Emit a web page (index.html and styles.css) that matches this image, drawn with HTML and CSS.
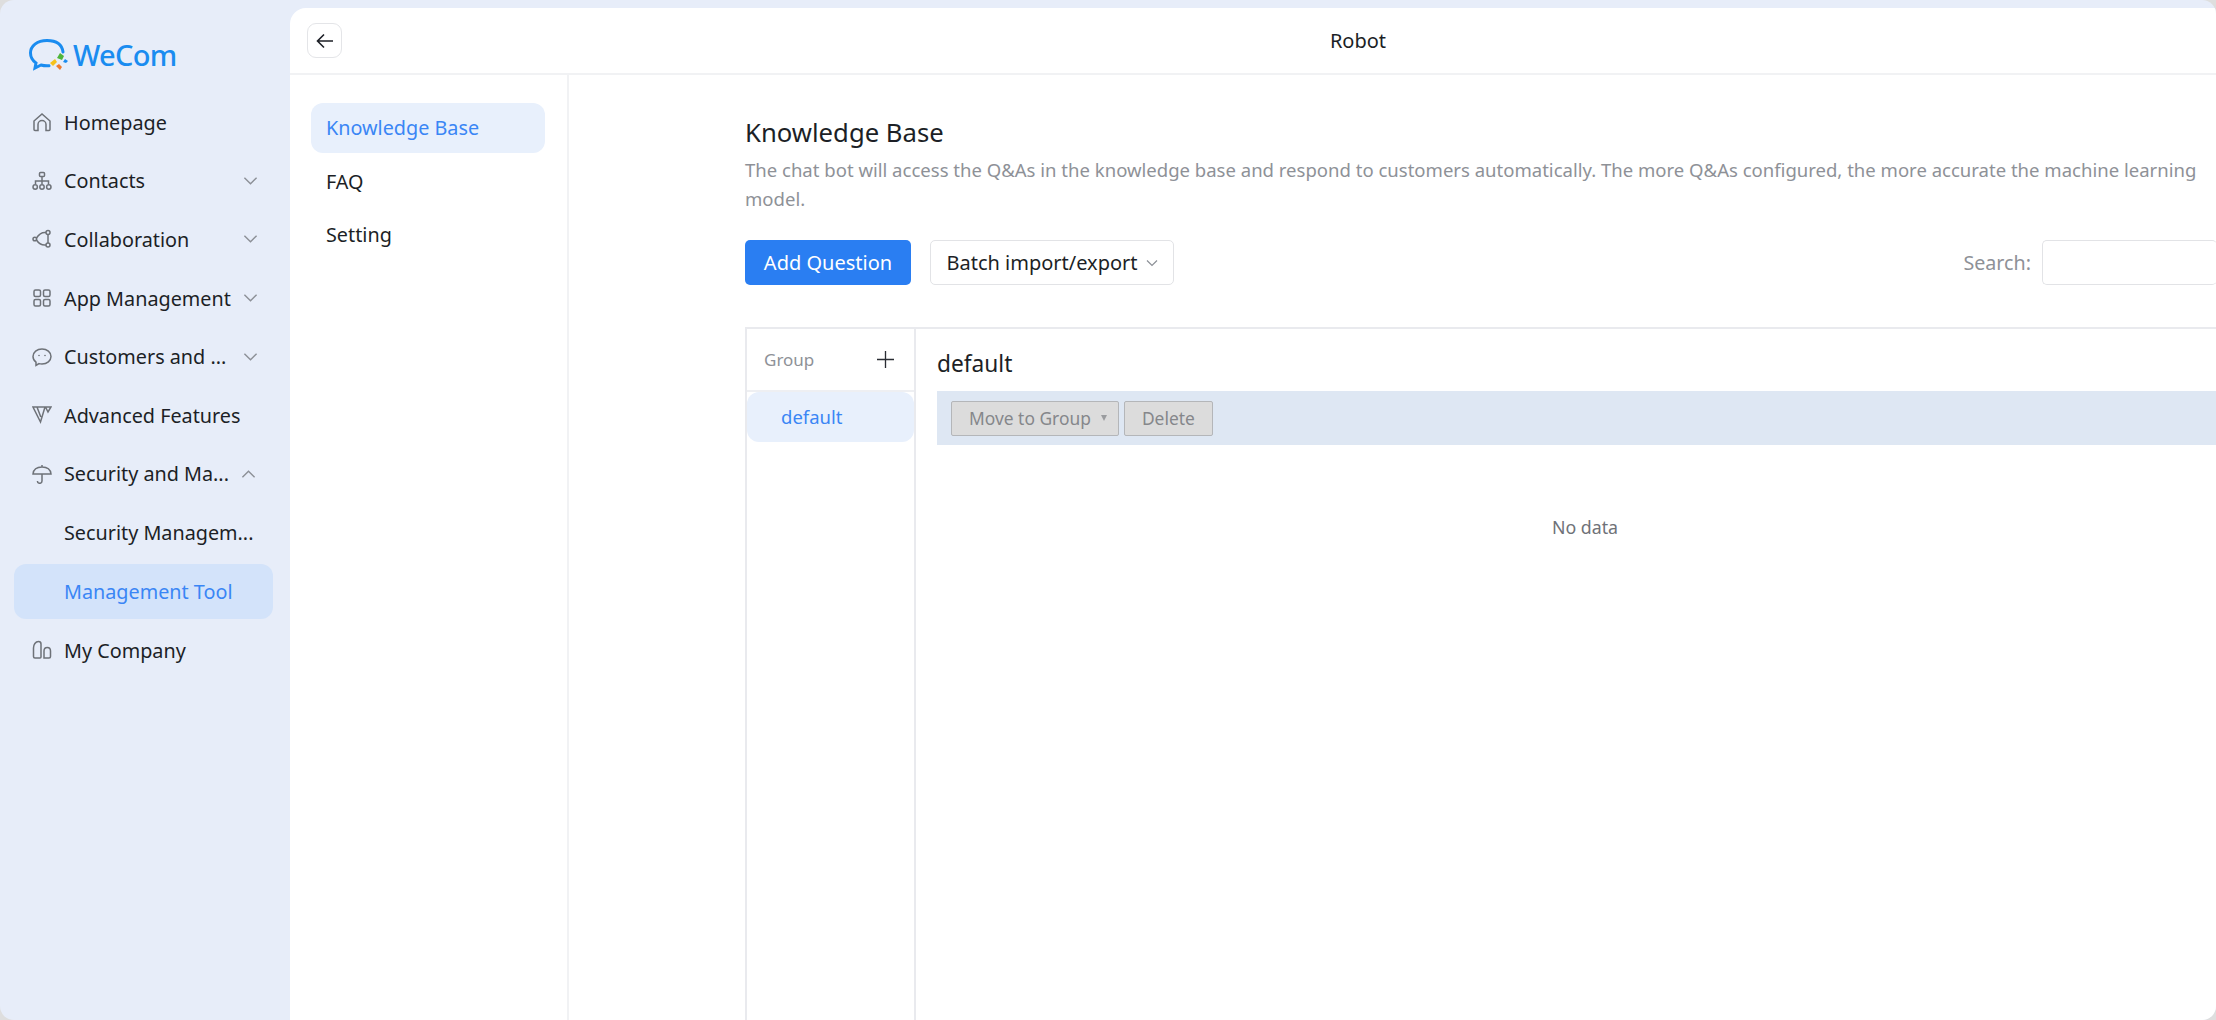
FILE: index.html
```html
<!DOCTYPE html>
<html lang="en">
<head>
<meta charset="utf-8">
<title>WeCom Robot</title>
<link rel="stylesheet" href="styles.css">
</head>
<body>
<div class="window">
  <aside class="sidebar">
    <div class="logo">
      <svg class="logo-mark" viewBox="0 0 42 34" width="42" height="34">
        <path d="M35 14C34 6.500 28 2.500 19 2.500C9 2.500 2.500 8 2.500 15C2.500 19.500 4.500 22.500 8 25L7 30L13 27C15.500 27.800 18 28 21 27.800" fill="none" stroke="#1a8cf0" stroke-width="3" stroke-linecap="round"/>
        <path d="M29 20l3-5 4 3-2 4z" fill="#4fb53a"/>
        <path d="M35 24l2-3 3 2-2 2z" fill="#1a8cf0"/>
        <path d="M22 25l5-4 2 3-4 4z" fill="#f6c21c"/>
        <path d="M28 28l3-2 3 3-2 3z" fill="#f07a2c"/>
      </svg>
      <span class="logo-text">WeCom</span>
    </div>
    <nav class="menu">
      <a class="menu-item"><svg class="ico" viewBox="0 0 20 20"><path d="M2 9L10 2l8 7v8.500a1 1 0 0 1-1 1h-3v-6a4 4 0 0 0-8 0v6H3a1 1 0 0 1-1-1z"/></svg><span class="label">Homepage</span></a>
      <a class="menu-item"><svg class="ico" viewBox="0 0 20 20"><rect x="7.500" y="1.500" width="5" height="4" rx="1"/><path d="M10 5.500V10M3.500 13v-3h13v3M10 10v3"/><circle cx="3.200" cy="16" r="2.200"/><circle cx="10" cy="16" r="2.200"/><circle cx="16.800" cy="16" r="2.200"/></svg><span class="label">Contacts</span><svg class="chev" viewBox="0 0 16 10"><path d="M1.500 1.500L8 8l6.500-6.500"/></svg></a>
      <a class="menu-item"><svg class="ico" viewBox="0 0 20 20"><circle cx="16" cy="3.500" r="2"/><circle cx="16" cy="16" r="2"/><circle cx="2.800" cy="10" r="1.800"/><path d="M14 3.500C10 3 7 5 4.500 9M4.500 11C7 15 10 16.500 14 16M16 5.500v8.500"/></svg><span class="label">Collaboration</span><svg class="chev" viewBox="0 0 16 10"><path d="M1.500 1.500L8 8l6.500-6.500"/></svg></a>
      <a class="menu-item"><svg class="ico" viewBox="0 0 20 20"><rect x="2" y="2" width="6.500" height="6.500" rx="1.500"/><rect x="11.500" y="2" width="6.500" height="6.500" rx="1.500"/><rect x="2" y="11.500" width="6.500" height="6.500" rx="1.500"/><rect x="11.500" y="11.500" width="6.500" height="6.500" rx="1.500"/></svg><span class="label">App Management</span><svg class="chev" viewBox="0 0 16 10"><path d="M1.500 1.500L8 8l6.500-6.500"/></svg></a>
      <a class="menu-item"><svg class="ico" viewBox="0 0 20 20"><path d="M10 2c5 0 9 3.300 9 7.500S15 17 10 17c-1 0-2-.1-3-.4L4 18.500v-3.300C2.200 13.900 1 11.800 1 9.500 1 5.300 5 2 10 2z"/><circle class="dot" cx="7" cy="8.500" r=".8"/><circle class="dot" cx="13" cy="8.500" r=".8"/></svg><span class="label">Customers and ...</span><svg class="chev" viewBox="0 0 16 10"><path d="M1.500 1.500L8 8l6.500-6.500"/></svg></a>
      <a class="menu-item"><svg class="ico" viewBox="0 0 20 20"><path d="M1 2h12l-4.500 15zM5 2l3.800 10M13.500 2h5.500l-3 5z"/></svg><span class="label">Advanced Features</span></a>
      <a class="menu-item"><svg class="ico" viewBox="0 0 20 20"><path d="M1 10C1.500 5.500 5 3 10 3s8.500 2.500 9 7zM10 1v2M10 10v7a2.300 2.300 0 0 1-4.600 0"/></svg><span class="label">Security and Ma...</span><svg class="chev up" viewBox="0 0 16 10"><path d="M1.500 8.500L8 2l6.500 6.500"/></svg></a>
      <a class="menu-item sub"><span class="label">Security Managem...</span></a>
      <a class="menu-item sub active"><span class="label">Management Tool</span></a>
      <a class="menu-item"><svg class="ico" viewBox="0 0 20 20"><path d="M1.500 16.500V8C1.500 4.500 3.500 1.500 6.500 1.500 8.300 1.500 9 2.500 9 4V17a1 1 0 0 1-1 1H3a1.500 1.500 0 0 1-1.500-1.500zM12 18V11c0-2 1.300-3.500 3.300-3.500S18.500 9 18.500 11v5.500A1.500 1.500 0 0 1 17 18z"/></svg><span class="label">My Company</span></a>
    </nav>
  </aside>
  <main class="panel">
    <header class="topbar">
      <button class="back" type="button" aria-label="Back">
        <svg viewBox="0 0 18 16" width="18" height="16"><path d="M8 1.500L1.500 8 8 14.500M1.500 8H17" fill="none" stroke="#1c1f26" stroke-width="1.600"/></svg>
      </button>
      <h1 class="topbar-title">Robot</h1>
    </header>
    <div class="body">
      <nav class="subnav">
        <a class="subnav-item active">Knowledge Base</a>
        <a class="subnav-item">FAQ</a>
        <a class="subnav-item">Setting</a>
      </nav>
      <section class="content">
        <h2 class="title">Knowledge Base</h2>
        <p class="desc">The chat bot will access the Q&amp;As in the knowledge base and respond to customers automatically. The more Q&amp;As configured, the more accurate the machine learning model.</p>
        <div class="actions">
          <button class="btn primary" type="button">Add Question</button>
          <button class="btn outline" type="button">Batch import/export<svg class="btn-chev" viewBox="0 0 12 8"><path d="M1 1.500L6 6.500l5-5"/></svg></button>
          <div class="search"><label class="search-label" for="q">Search:</label><input class="search-input" id="q" type="text"></div>
        </div>
        <div class="kb">
          <div class="groups">
            <div class="groups-head"><span>Group</span>
              <svg viewBox="0 0 18 18" width="17" height="17"><path d="M9 0v18M0 9h18" stroke="#2a2d33" stroke-width="1.400" fill="none"/></svg>
            </div>
            <div class="group-item">default</div>
          </div>
          <div class="detail">
            <h3 class="detail-title">default</h3>
            <div class="toolbar">
              <button class="tool move" type="button">Move to Group<i class="caret"></i></button>
              <button class="tool" type="button">Delete</button>
            </div>
            <div class="empty">No data</div>
          </div>
        </div>
      </section>
    </div>
  </main>
</div>
</body>
</html>
```
FILE: styles.css
```css
* { box-sizing: border-box; }
html, body { margin: 0; height: 100%; overflow: hidden; background: #dedede; }
body { font-family: "Noto Sans", "Open Sans", "Liberation Sans", sans-serif; color: #1c1f26; }
h1, h2, h3, p { margin: 0; font-weight: 400; }
button { font-family: inherit; }

.window { display: flex; width: 2216px; height: 1020px; background: #e7edf9; border-radius: 14px; overflow: hidden; }

.sidebar { flex: 0 0 290px; padding: 0 17px 0 14px; }
.logo { display: flex; align-items: center; height: 34px; margin: 38px 0 21px; padding-left: 14px; gap: 3px; }
.logo-text { font-size: 29px; line-height: 34px; color: #1a8cf0; font-weight: 500; letter-spacing: -.7px; }
.menu { display: flex; flex-direction: column; }
.menu-item { display: flex; align-items: center; height: 58.600px; padding-left: 18px; font-size: 19.800px; border-radius: 12px; white-space: nowrap; }
.ico { width: 20px; height: 20px; margin-right: 12px; flex: none; fill: none; stroke: #6e7278; stroke-width: 1.500; }
.dot { fill: #6e7278; stroke: none; }
.label { flex: 1; min-width: 0; }
.chev { width: 15px; height: 10px; flex: none; margin-right: 15px; fill: none; stroke: #8c9097; stroke-width: 1.500; }
.chev.up { margin-right: 17px; }
.sub { padding-left: 50px; }
.sub.active { height: 55px; margin: 2px 0; background: #d3e3fa; color: #3a86f5; }

.panel { flex: 1; margin-top: 8px; background: #fff; border-radius: 16px 0 0 0; display: flex; flex-direction: column; min-width: 0; }
.topbar { flex: none; height: 67px; border-bottom: 2px solid #f1f2f4; display: flex; align-items: center; padding-left: 17px; }
.back { width: 35px; height: 35px; padding: 0; border: 1.500px solid #e4e5e8; border-radius: 9px; background: #fff; display: flex; align-items: center; justify-content: center; }
.topbar-title { flex: 1; text-align: center; font-size: 20px; padding-left: 158px; }

.body { flex: 1; display: flex; min-height: 0; }
.subnav { flex: 0 0 279px; border-right: 2px solid #f1f2f4; padding: 28px 0 0 21px; display: flex; flex-direction: column; }
.subnav-item { width: 234px; height: 50px; line-height: 50px; padding-left: 15px; font-size: 19.800px; border-radius: 12px; margin-bottom: 3.500px; }
.subnav-item.active { background: #e8f0fc; color: #3a86f5; }

.content { flex: 1; min-width: 0; padding: 40px 0 0 176px; }
.title { font-size: 25.700px; line-height: 36px; }
.desc { font-size: 18.550px; line-height: 29px; color: #8e9197; width: 1460px; margin-top: 4px; }
.actions { display: flex; align-items: center; margin-top: 27px; }
.btn { height: 45px; border-radius: 5px; font-size: 20px; padding: 0; }
.primary { width: 166px; background: #2a7ef2; color: #fff; border: 0; }
.outline { width: 244px; margin-left: 19px; background: #fff; border: 1.500px solid #e2e3e6; color: #1c1f26; display: flex; align-items: center; justify-content: center; gap: 8px; }
.btn-chev { width: 12px; height: 8px; fill: none; stroke: #8c9097; stroke-width: 1.200; }
.search { margin-left: auto; display: flex; align-items: center; margin-right: -1px; }
.search-label { font-size: 19.700px; color: #8e9197; margin-right: 11px; }
.search-input { width: 175px; height: 45px; border: 1.500px solid #e2e3e6; border-radius: 5px; background: #fff; border-right: 0; }

.kb { display: flex; margin-top: 42px; height: 760px; border-top: 2px solid #e9eaee; border-left: 2px solid #e9eaee; }
.groups { flex: 0 0 169px; border-right: 2px solid #e9eaee; }
.groups-head { height: 63px; border-bottom: 2px solid #eeeff2; display: flex; align-items: center; justify-content: space-between; padding: 0 20px 0 17px; font-size: 17px; color: #8e9197; }
.group-item { height: 50px; line-height: 50px; padding-left: 34px; background: #e8f0fc; color: #3a86f5; font-size: 18.500px; border-radius: 12px; }
.detail { flex: 1; min-width: 0; padding-left: 21px; }
.detail-title { font-size: 22.700px; line-height: 62px; height: 62px; padding-top: 4px; }
.toolbar { height: 54px; background: #dee7f3; display: flex; align-items: center; padding-left: 14px; gap: 5px; }
.tool { height: 35px; background: #dcdcdc; border: 1.500px solid #b4b6b9; border-radius: 2px; color: #85878b; font-size: 17.400px; padding: 0 17px; display: flex; align-items: center; }
.tool.move { padding-right: 11px; }
.caret { width: 0; height: 0; margin-left: 10px; border-left: 3.500px solid transparent; border-right: 3.500px solid transparent; border-top: 6px solid #9a9c9f; }
.empty { text-align: center; font-size: 17.800px; color: #6f7278; margin-top: 70px; width: 1296px; }
```
